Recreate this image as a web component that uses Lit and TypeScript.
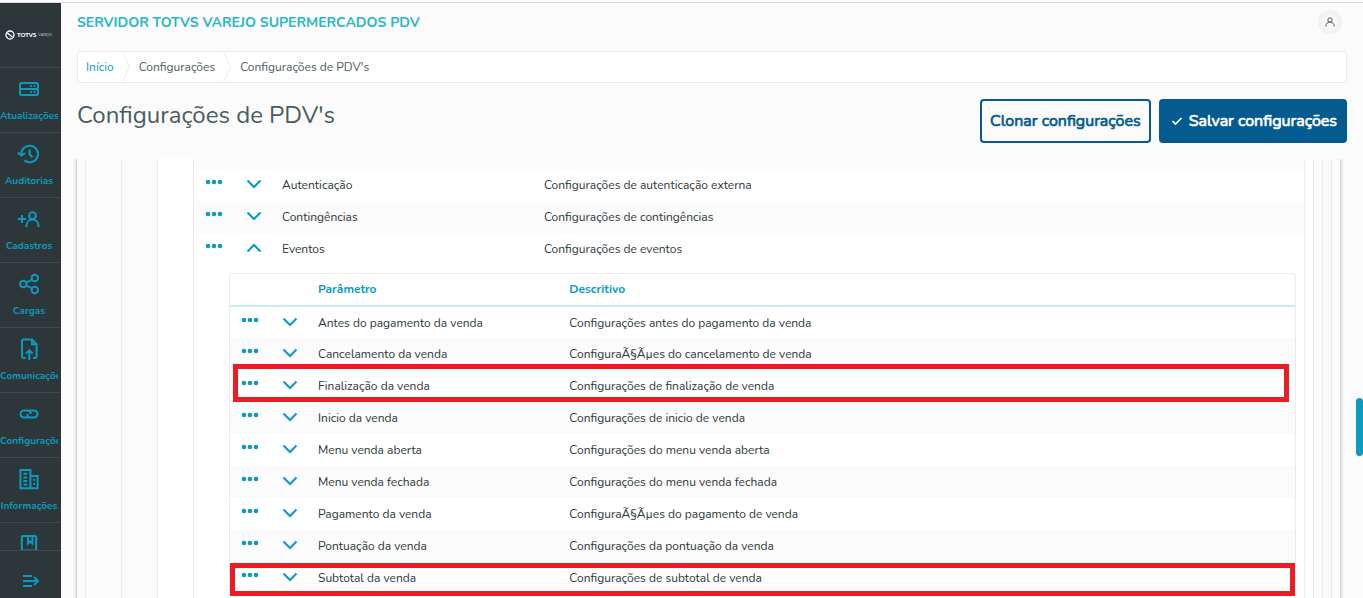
import { LitElement, html, css, svg, nothing } from "lit";
import { customElement, state } from "lit/decorators.js";
import { classMap } from "lit/directives/class-map.js";

interface Row {
  name: string;
  text: string;
  mark?: string;
}

const groups: Row[] = [
  { name: "Autenticação", text: "Configurações de autenticação externa" },
  { name: "Contingências", text: "Configurações de contingências" },
  { name: "Eventos", text: "Configurações de eventos" },
];

const events: Row[] = [
  { name: "Antes do pagamento da venda", text: "Configurações antes do pagamento da venda" },
  { name: "Cancelamento da venda", text: "ConfiguraÃ§Ãµes do cancelamento de venda" },
  { name: "Finalização da venda", text: "Configurações de finalização de venda", mark: "inset" },
  { name: "Inicio da venda", text: "Configurações de inicio de venda" },
  { name: "Menu venda aberta", text: "Configurações do menu venda aberta" },
  { name: "Menu venda fechada", text: "Configurações do menu venda fechada" },
  { name: "Pagamento da venda", text: "ConfiguraÃ§Ãµes do pagamento de venda" },
  { name: "Pontuação da venda", text: "Configurações da pontuação da venda" },
  { name: "Subtotal da venda", text: "Configurações de subtotal de venda", mark: "full" },
];

const icons = {
  server: svg`<rect x="3" y="6" width="18" height="6" rx="1.500"/><rect x="3" y="12" width="18" height="6" rx="1.500"/><path d="M13 9h1.800M16.600 9h1.800M13 15h1.800M16.600 15h1.800"/>`,
  history: svg`<path d="M4.400 13a8.300 8.300 0 1 1 3 5.400"/><path d="M.8 10.600l3.600 3 3.600-2.400M12.600 7.400v5l3 3"/>`,
  addUser: svg`<circle cx="15.500" cy="8.700" r="3.400"/><path d="M9.400 20c0-4.600 2.600-7.400 6.100-7.400s6.100 2.800 6.100 7.400M1 12h8M5 8v8"/>`,
  share: svg`<circle cx="6.200" cy="12" r="3.200"/><circle cx="17.800" cy="6" r="3.200"/><circle cx="17.800" cy="18" r="3.200"/><path d="M9 10.600l6-3M9 13.400l6 3"/>`,
  upload: svg`<path d="M8.600 21H6.400A1.400 1.400 0 0 1 5 19.600V4a1.400 1.400 0 0 1 1.400-1.400H15l4.600 4.600v12.400a1.400 1.400 0 0 1-1.400 1.400H16"/><path d="M15 2.800v4.400h4.400M12.300 23v-9.400M8.900 16.600l3.400-3.400 3.400 3.400"/>`,
  link: svg`<path d="M11.600 15.500H7a3.500 3.500 0 0 1 0-7h3.200c2 0 3.500 1.500 3.500 3.500M12.400 8.500H17a3.500 3.500 0 0 1 0 7h-3.200c-2 0-3.500-1.500-3.500-3.500"/>`,
  building: svg`<path d="M3.400 21.200V3h10v18.200zM13.400 9h7.200v12.200h-7.200M6.400 6.800h3.800M6.400 10.400h3.800M6.400 14h3.800M6.400 17.600h3.800M16.200 13h1.800M16.200 17h1.800"/>`,
  book: svg`<rect x="4.800" y="4" width="14.400" height="14.500" rx="1"/><path d="M11 4v7.400l2.200-2 2.200 2V4"/>`,
};

const nav = [
  { label: "Atualizações", icon: icons.server },
  { label: "Auditorias", icon: icons.history },
  { label: "Cadastros", icon: icons.addUser },
  { label: "Cargas", icon: icons.share },
  { label: "Comunicações", icon: icons.upload },
  { label: "Configurações", icon: icons.link },
  { label: "Informações", icon: icons.building },
  { label: "", icon: icons.book },
];

@customElement("app-root")
export class AppRoot extends LitElement {
  @state() private eventsOpen = true;

  static styles = css`
    :host {
      --blue: #0c9abe;
      --line: #ebebeb;
      --page: #fbfbfb;
      display: flex;
      flex-direction: column;
      height: 100vh;
      overflow: hidden;
      position: relative;
      background: #fff;
      color: #2c3739;
      font: 12px/16px Nunito, "Open Sans", sans-serif;
    }
    * { box-sizing: border-box; }
    button { font: inherit; color: inherit; background: none; border: 0; padding: 0; cursor: pointer; }
    a { color: inherit; text-decoration: none; }
    svg { display: block; fill: none; stroke: currentColor; }

    .shell { display: flex; flex: 1; min-height: 0; margin-top: 2px; border-top: 1px solid #ddd; background: var(--page); }
    .side { width: 61px; flex: none; display: flex; flex-direction: column; background: #2d3739; color: var(--blue); }
    .logo { height: 64px; flex: none; display: flex; align-items: center; padding-left: 5px; gap: 2px; color: #fff; }
    .logo-name { font: 900 6px/8px Lato, sans-serif; }
    .logo-sub { font: 4px/8px "Open Sans", sans-serif; color: #c5cacb; }
    .nav { flex: 1; min-height: 0; overflow: hidden; margin: 0; padding: 0 1px 0 0; list-style: none; }
    .nav-link { display: flex; flex-direction: column; align-items: center; gap: 7px; height: 65px; padding: 9px 2px 0 0; border-top: 1px solid #3d494b; }
    .nav-text { max-width: 58px; overflow: hidden; white-space: nowrap; font: 700 10px/16px Nunito, Lato, sans-serif; }
    .side-foot { height: 48px; flex: none; display: flex; align-items: center; justify-content: center; padding-top: 12px; border-top: 1px solid #3d494b; }

    .main { flex: 1; min-width: 0; display: flex; flex-direction: column; padding: 0 16px; }
    .top { height: 48px; flex: none; display: flex; align-items: center; justify-content: space-between; padding: 0 5px 10px 0; }
    .brand { font-size: 14px; line-height: 18px; padding-top: 2px; font-weight: 700; color: #29b6c5; }
    .avatar { width: 24px; height: 24px; border-radius: 12px; display: grid; place-items: center; background: radial-gradient(#f8f8f8 30%, #e9e9e9); color: #4a5c60; }
    .crumbs { display: flex; flex: none; height: 32px; margin: 0; padding: 0 8px; list-style: none; background: #fff; border: 1px solid var(--line); border-radius: 3px; color: #4a5c60; }
    .crumb { display: flex; align-items: center; gap: 8px; margin-right: 9px; }
    .crumb-link { color: var(--blue); }
    .crumb-sep { color: var(--line); }
    .title-row { display: flex; flex: none; justify-content: space-between; padding: 16px 0; }
    .title { margin: 0; font-size: 24px; line-height: 32px; font-weight: 400; color: #4a5c60; }
    .actions { display: flex; gap: 8px; }
    .action { height: 44px; display: flex; align-items: center; justify-content: center; gap: 6px; padding: 0 8px; border: 2px solid #045b8f; border-radius: 4px; font-size: 16px; line-height: 24px; font-weight: 400; -webkit-text-stroke: 0.7px currentColor; color: #045b8f; white-space: nowrap; }
    .primary { padding-left: 10px; background: #045b8f; color: #fff; }

    .scroll { flex: 1; min-height: 0; overflow: hidden; margin: 0 0 0 -4px; padding: 0 7px 0 4px; }
    .widget { padding: 0 8px; background: var(--page); box-shadow: 0 0 4px rgba(0, 0, 0, 0.35); }
    .level { border: solid var(--line); border-width: 0 1px; padding: 0 8px 0 35px; }
    .level-white { background: #fff; }
    .level-last { padding: 0; min-height: 460px; }
    .lead { height: 10px; background: var(--page); }

    table { width: 100%; table-layout: fixed; border-collapse: separate; border-spacing: 0; }
    .col-icon { width: 40px; }
    .col-name { width: 23.6%; }
    td, th { height: 32px; padding: 0 8px; text-align: left; white-space: nowrap; }
    .row { position: relative; background: #fff; }
    .alt { background: var(--page); }
    .cell-dots, .cell-fold { padding: 0; vertical-align: top; }
    .icon-btn { display: grid; place-items: center; width: 40px; height: 26px; color: var(--blue); }
    .fold { height: 30px; }
    .up { transform: rotate(180deg); }
    .dots { fill: currentColor; stroke: none; }
    .detail { padding: 8px 8px 0 35px; background: #fff; }
    .inner { border: 1px solid var(--line); border-radius: 3px; }
    .head { height: 33px; padding-bottom: 2px; border-bottom: 2px solid #cbebf3; color: var(--blue); font-weight: 700; }
    .inner .first td { height: 31px; }
    .mark { position: absolute; border: 5px solid #ed1c24; pointer-events: none; z-index: 1; }
    .mark-inset { inset: -6px 6px 0 3px; }
    .mark-full { inset: 1px 0 -2px 0; }
    .thumb { position: absolute; right: 0; top: 66.6%; width: 7px; height: 58px; border-radius: 4px; background: var(--blue); }
  `;

  private row(r: Row, i: number, fold?: () => void, open = false) {
    return html`<tr class=${classMap({ row: true, first: i === 0, alt: i % 2 === 1 })}>
      <td class="cell-dots"><button class="icon-btn" aria-label="Ações de ${r.name}">
        <svg class="dots" width="18" height="6" viewBox="0 0 18 6"><circle cx="3" cy="3" r="2.300"/><circle cx="9" cy="3" r="2.300"/><circle cx="15" cy="3" r="2.300"/></svg>
      </button></td>
      <td class="cell-fold"><button class="icon-btn fold" aria-label="Detalhes de ${r.name}" aria-expanded=${open} @click=${fold}>
        <svg class=${open ? "up" : ""} width="16" height="10" viewBox="0 0 16 10"><path d="M1.500 1.500L8 8l6.500-6.500" stroke-width="2"/></svg>
      </button></td>
      <td>${r.name}</td>
      <td>${r.text}${r.mark ? html`<span class="mark mark-${r.mark}"></span>` : nothing}</td>
    </tr>`;
  }

  private cols() {
    return html`<colgroup><col class="col-icon"><col class="col-icon"><col class="col-name"><col></colgroup>`;
  }

  private toggle = () => { this.eventsOpen = !this.eventsOpen; };

  render() {
    return html`
      <div class="shell">
        <aside class="side">
          <div class="logo">
            <svg width="10" height="10" viewBox="0 0 10 10" stroke-width="1.300"><circle cx="5" cy="5" r="4"/><path d="M2.400 3L7.400 7"/></svg>
            <span class="logo-name">TOTVS</span><span class="logo-sub">VAREJO</span>
          </div>
          <ul class="nav">
            ${nav.map((n) => html`<li><a class="nav-link" href="#">
              <svg width="24" height="24" viewBox="0 0 24 24" stroke-width="2">${n.icon}</svg>
              ${n.label ? html`<span class="nav-text">${n.label}</span>` : nothing}
            </a></li>`)}
          </ul>
          <button class="side-foot" aria-label="Expandir menu">
            <svg width="18" height="14" viewBox="0 0 18 14" stroke-width="2"><path d="M1 2h9M1 7h15M1 12h9M12 3l4 4-4 4"/></svg>
          </button>
        </aside>
        <main class="main">
          <header class="top">
            <span class="brand">SERVIDOR TOTVS VAREJO SUPERMERCADOS PDV</span>
            <button class="avatar" aria-label="Usuário">
              <svg width="10" height="10" viewBox="0 0 10 10"><circle cx="5" cy="3" r="2.200"/><path d="M.8 9.500C.8 6.600 2.600 5.200 5 5.200s4.200 1.400 4.200 4.300"/></svg>
            </button>
          </header>
          <ol class="crumbs">
            <li class="crumb"><a class="crumb-link" href="#">Início</a>${this.separator()}</li>
            <li class="crumb"><a href="#">Configurações</a>${this.separator()}</li>
            <li class="crumb">Configurações de PDV's</li>
          </ol>
          <div class="title-row">
            <h1 class="title">Configurações de PDV's</h1>
            <div class="actions">
              <button class="action">Clonar configurações</button>
              <button class="action primary">
                <svg width="12" height="10" viewBox="0 0 12 10" stroke-width="1.600"><path d="M1.500 5l3 3L10.500 2"/></svg>
                Salvar configurações
              </button>
            </div>
          </div>
          <div class="scroll">
            <div class="widget"><div class="level"><div class="level"><div class="level level-white"><div class="level level-last">
              <div class="lead"></div>
              <table>
                ${this.cols()}
                <tbody>
                  ${groups.map((g, i) => this.row(g, i, i === 2 ? this.toggle : undefined, i === 2 && this.eventsOpen))}
                  ${this.eventsOpen ? html`<tr><td class="detail" colspan="4">
                    <table class="inner">
                      ${this.cols()}
                      <thead><tr><th class="head"></th><th class="head"></th><th class="head">Parâmetro</th><th class="head">Descritivo</th></tr></thead>
                      <tbody>${events.map((e, i) => this.row(e, i))}</tbody>
                    </table>
                  </td></tr>` : nothing}
                </tbody>
              </table>
            </div></div></div></div></div>
          </div>
        </main>
      </div>
      <div class="thumb"></div>
    `;
  }

  private separator() {
    return html`<svg class="crumb-sep" width="8" height="30" viewBox="0 0 8 30"><path d="M.5 0l7 15-7 15"/></svg>`;
  }
}
